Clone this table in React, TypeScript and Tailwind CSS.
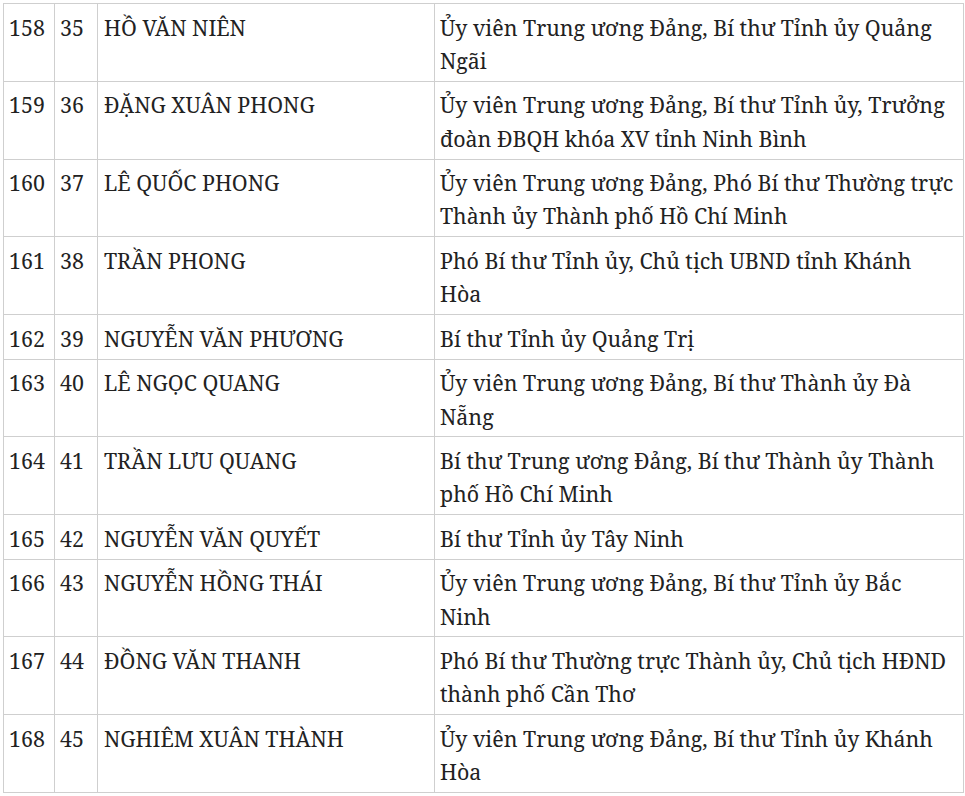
import React from "react";

const rows: [string, string, string, string[]][] = [
  ["158", "35", "HỒ VĂN NIÊN", ["Ủy viên Trung ương Đảng, Bí thư Tỉnh ủy Quảng", "Ngãi"]],
  ["159", "36", "ĐẶNG XUÂN PHONG", ["Ủy viên Trung ương Đảng, Bí thư Tỉnh ủy, Trưởng", "đoàn ĐBQH khóa XV tỉnh Ninh Bình"]],
  ["160", "37", "LÊ QUỐC PHONG", ["Ủy viên Trung ương Đảng, Phó Bí thư Thường trực", "Thành ủy Thành phố Hồ Chí Minh"]],
  ["161", "38", "TRẦN PHONG", ["Phó Bí thư Tỉnh ủy, Chủ tịch UBND tỉnh Khánh", "Hòa"]],
  ["162", "39", "NGUYỄN VĂN PHƯƠNG", ["Bí thư Tỉnh ủy Quảng Trị"]],
  ["163", "40", "LÊ NGỌC QUANG", ["Ủy viên Trung ương Đảng, Bí thư Thành ủy Đà", "Nẵng"]],
  ["164", "41", "TRẦN LƯU QUANG", ["Bí thư Trung ương Đảng, Bí thư Thành ủy Thành", "phố Hồ Chí Minh"]],
  ["165", "42", "NGUYỄN VĂN QUYẾT", ["Bí thư Tỉnh ủy Tây Ninh"]],
  ["166", "43", "NGUYỄN HỒNG THÁI", ["Ủy viên Trung ương Đảng, Bí thư Tỉnh ủy Bắc", "Ninh"]],
  ["167", "44", "ĐỒNG VĂN THANH", ["Phó Bí thư Thường trực Thành ủy, Chủ tịch HĐND", "thành phố Cần Thơ"]],
  ["168", "45", "NGHIÊM XUÂN THÀNH", ["Ủy viên Trung ương Đảng, Bí thư Tỉnh ủy Khánh", "Hòa"]],
];

const cell = "border border-[#cfcfcf] align-top pt-[6.6px] pb-[3.6px] pr-[5px] whitespace-nowrap overflow-hidden";

export default function App() {
  return (
    <div className="w-[965px] h-[796px] bg-white pl-[3px] pt-[3px] overflow-hidden">
      <table
        className="table-fixed border-collapse text-[21.4px] leading-[33.3px] text-[#222222]"
        style={{ fontFamily: '"Noto Serif", "DejaVu Serif", "Liberation Serif", serif', width: 960 }}
      >
        <colgroup>
          <col className="w-[51px]" />
          <col className="w-[43px]" />
          <col className="w-[337px]" />
          <col className="w-[529px]" />
        </colgroup>
        <tbody>
          {rows.map(([a, b, name, desc]) => (
            <tr key={a}>
              <td className={cell + " pl-[5px]"}>{a}</td>
              <td className={cell + " pl-[5px]"}>{b}</td>
              <td className={cell + " pl-[6px]"}>{name}</td>
              <td className={cell + " pl-[5px]"}>
                {desc.map((l, i) => (
                  <div key={i}>{l}</div>
                ))}
              </td>
            </tr>
          ))}
        </tbody>
      </table>
    </div>
  );
}
